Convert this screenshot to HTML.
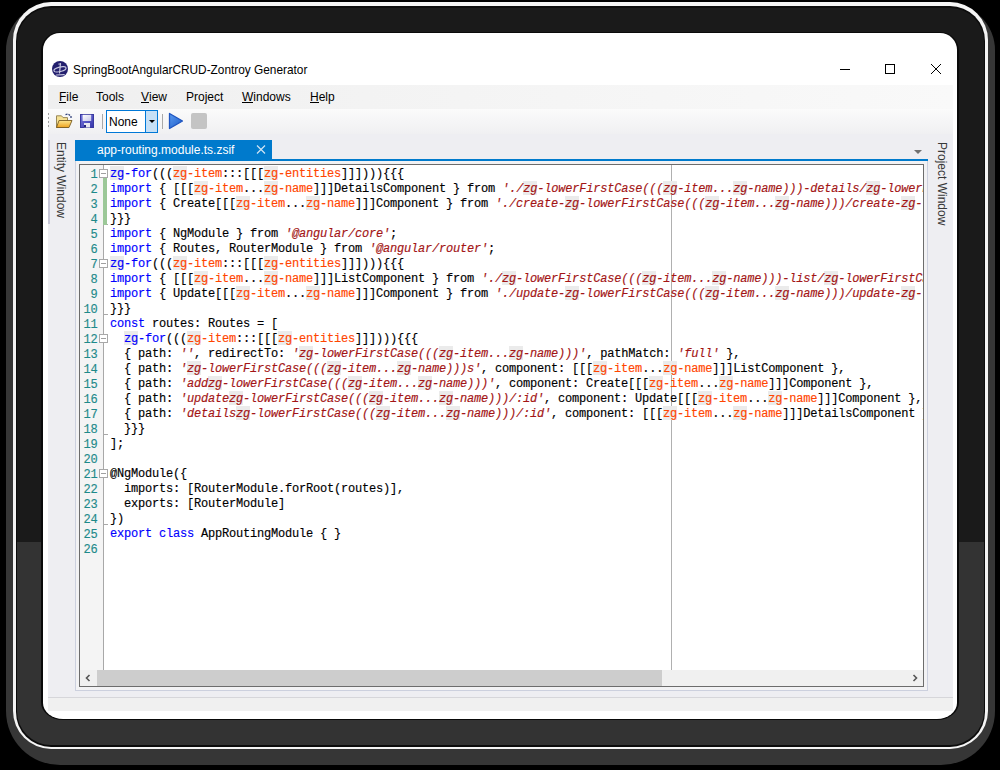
<!DOCTYPE html>
<html><head><meta charset="utf-8">
<style>
*{margin:0;padding:0;box-sizing:border-box}
html,body{width:1000px;height:770px;overflow:hidden;background:#000}
body{position:relative;font-family:"Liberation Sans",sans-serif}
.a{position:absolute}
#shadow{left:5.5px;top:4px;width:989.5px;height:760.5px;border-radius:46px 46px 54px 54px;background:#363636}
#rim{left:13px;top:2px;width:975px;height:747px;border-radius:38px;background:#f4f4f4}
#rimline{left:15.6px;top:6px;width:969.4px;height:740.5px;border-radius:35px;background:#0c0c0c}
#bezel{left:16.5px;top:7.8px;width:967.5px;height:737.2px;border-radius:34px;background:linear-gradient(#1a1a1a 0,#1a1a1a 534.5px,#333 534.5px)}
#screenline{left:41px;top:31.8px;width:917.5px;height:688.4px;border-radius:19px 19px 22px 22px / 19px 19px 18px 18px;background:#0a0a0a}
#screen{left:43px;top:33.3px;width:914px;height:685.9px;border-radius:17px 17px 20px 20px / 17px 17px 16px 16px;background:#fff;overflow:hidden}
#page{position:absolute;left:-43px;top:-33.3px;width:1000px;height:770px}
.ui{position:absolute;font-size:12px;color:#000;white-space:pre;line-height:14px}
.ui u{text-decoration:none;position:relative}
.ui u:after{content:"";position:absolute;left:0;right:0;bottom:1.5px;height:1px;background:#000}
.ln{position:absolute;left:110px;height:15px;line-height:15px;margin-top:2px;-webkit-text-stroke:0.15px currentColor;font-family:"Liberation Mono",monospace;font-size:12px;letter-spacing:-0.2px;white-space:pre;color:#000}
.ln i{font-style:normal}
.ln i.k{color:#0000ff}
.ln i.o{color:#ff4500}
.ln i.s{color:#a31515;font-style:italic}
.fb{position:absolute;left:99px;width:9px;height:9px;border:1px solid #a8a8a8;background:#fff}
.fb:after{content:"";position:absolute;left:1px;top:3px;width:5px;height:1px;background:#a0a0a0}
.zb{position:absolute;width:14px;height:14px;background:#ebebeb}
.num{position:absolute;left:80.5px;width:17px;text-align:right;height:15px;line-height:15px;margin-top:3px;-webkit-text-stroke:0.15px currentColor;font-family:"Liberation Mono",monospace;font-size:12px;letter-spacing:-0.2px;color:#1e8a8a}
</style></head><body>
<div id="shadow" class="a"></div>
<div id="rim" class="a"></div>
<div id="rimline" class="a"></div>
<div id="bezel" class="a"></div>
<div id="screenline" class="a"></div>
<div id="screen" class="a"><div id="page">
  <!-- title bar -->
  <svg class="a" style="left:52px;top:61px" width="16" height="16" viewBox="0 0 16 16">
    <circle cx="8" cy="8" r="8" fill="#231f6e"/>
    <g stroke="#c8c8e0" stroke-width="1.2" fill="none" stroke-linecap="round">
      <path d="M8.4 2.6 L7.6 12"/>
      <path d="M6.8 3 L8.6 3"/>
      <ellipse cx="8" cy="8.3" rx="6.2" ry="2.3" transform="rotate(-14 8 8.3)"/>
      <path d="M4.4 14 L12.2 13.6"/>
    </g>
  </svg>
  <div class="ui" style="left:73px;top:62.6px;font-size:11.85px">SpringBootAngularCRUD-Zontroy Generator</div>
  <div class="a" style="left:840px;top:69px;width:10px;height:1px;background:#000"></div>
  <div class="a" style="left:885px;top:64px;width:10px;height:10px;border:1px solid #000"></div>
  <svg class="a" style="left:930px;top:63px" width="12" height="12" viewBox="0 0 12 12"><path d="M1 1L11 11M11 1L1 11" stroke="#000" stroke-width="1"/></svg>

  <!-- menu bar -->
  <div class="a" style="left:48px;top:85px;width:905px;height:24px;background:linear-gradient(to right,#efefef 0%,#f3f3f3 35%,#f9f9f9 100%)"></div>
  <div class="ui" style="left:59px;top:90px"><u>F</u>ile</div>
  <div class="ui" style="left:96px;top:90px">Tools</div>
  <div class="ui" style="left:141px;top:90px"><u>V</u>iew</div>
  <div class="ui" style="left:186px;top:90px">Project</div>
  <div class="ui" style="left:242px;top:90px"><u>W</u>indows</div>
  <div class="ui" style="left:310px;top:90px"><u>H</u>elp</div>

  <!-- toolbar -->
  <div class="a" style="left:48px;top:109px;width:905px;height:25px;background:linear-gradient(#fbfbfb,#f0f0f2)"></div>
  <div class="a" style="left:48px;top:113px;width:1px;height:14px;background:repeating-linear-gradient(#a0a0a0 0 2px,transparent 2px 4px)"></div>
  <!-- folder -->
  <svg class="a" style="left:55px;top:113px" width="18" height="16" viewBox="0 0 18 16">
    <defs><linearGradient id="fg" x1="0" y1="0" x2="0" y2="1"><stop offset="0" stop-color="#fde68e"/><stop offset="1" stop-color="#eea21e"/></linearGradient></defs>
    <path d="M1.5 2.8 L6.5 2.8 L8 4.6 L12.5 4.6 L12.5 14.5 L1.5 14.5 Z" fill="#f6e294" stroke="#9a8858" stroke-width="1"/>
    <path d="M1.5 14.5 L4 7.5 L17 7.5 L14 14.5 Z" fill="url(#fg)" stroke="#7a5e24" stroke-width="0.9" stroke-linejoin="round"/>
    <path d="M10.5 1.6 L12.5 1.2 M13.5 1.2 L15 2.4 M16 3 L16 5" stroke="#34447c" stroke-width="1.3" fill="none"/>
  </svg>
  <!-- floppy -->
  <svg class="a" style="left:80px;top:114px" width="14" height="14" viewBox="0 0 14 14">
    <defs><linearGradient id="flg" x1="0" y1="0" x2="1" y2="1"><stop offset="0" stop-color="#7a7ae0"/><stop offset="1" stop-color="#3434a8"/></linearGradient>
    <linearGradient id="lbl" x1="0" y1="0" x2="1" y2="1"><stop offset="0" stop-color="#ffffff"/><stop offset="1" stop-color="#c8c8e8"/></linearGradient></defs>
    <rect x="0" y="0" width="14" height="14" fill="url(#flg)"/>
    <rect x="0.5" y="0.5" width="13" height="13" fill="none" stroke="#3a3aa0" stroke-width="1"/>
    <rect x="2.6" y="0.8" width="8.6" height="6.2" fill="url(#lbl)"/>
    <rect x="4" y="9" width="6" height="4.5" fill="#e8e8f0"/>
    <rect x="4" y="11" width="2" height="2.5" fill="#22227a"/>
  </svg>
  <div class="a" style="left:102px;top:114px;width:1px;height:15px;background:#a8a8a8"></div>
  <!-- combo -->
  <div class="a" style="left:106px;top:110px;width:52px;height:23px;border:1px solid #0078d7;background:#fff"></div>
  <div class="a" style="left:145px;top:111px;width:12px;height:21px;background:#c6e0f6;border-left:1px solid #0078d7"></div>
  <div class="a" style="left:149px;top:120px;width:0;height:0;border-left:3px solid transparent;border-right:3px solid transparent;border-top:3px solid #000"></div>
  <div class="ui" style="left:109px;top:114.5px">None</div>
  <div class="a" style="left:162px;top:114px;width:1px;height:15px;background:#a8a8a8"></div>
  <!-- play -->
  <svg class="a" style="left:168px;top:112px" width="16" height="18" viewBox="0 0 16 18">
    <defs><linearGradient id="pg" x1="0" y1="0" x2="1" y2="1"><stop offset="0" stop-color="#5a9af0"/><stop offset="1" stop-color="#1c5cc8"/></linearGradient></defs>
    <path d="M1.5 1.5 L14.5 9 L1.5 16.5 Z" fill="url(#pg)" stroke="#1f55c0" stroke-width="1.3" stroke-linejoin="round"/>
  </svg>
  <!-- stop -->
  <div class="a" style="left:191px;top:113px;width:16px;height:16px;border-radius:2px;background:#c4c4c4"></div>

  <!-- dock area -->
  <div class="a" style="left:48px;top:134px;width:905px;height:563px;background:#eeeef2"></div>
  <div class="a" style="left:48px;top:697px;width:905px;height:1px;background:#d6d6da"></div>
  <div class="a" style="left:48px;top:698px;width:905px;height:13px;background:#f0f0f0"></div>
  <!-- left auto-hide tab -->
  <div class="a" style="left:48px;top:140px;width:2px;height:84px;background:#c6c6d6"></div>
  <div class="ui" style="left:68.2px;top:142px;transform-origin:0 0;transform:rotate(90deg);color:#383838">Entity Window</div>
  <div class="ui" style="left:949.2px;top:142px;transform-origin:0 0;transform:rotate(90deg);color:#383838">Project Window</div>

  <!-- document tab -->
  <div class="a" style="left:75px;top:140px;width:197px;height:20px;background:#007acc"></div>
  <div class="ui" style="left:97px;top:143px;color:#fff">app-routing.module.ts.zsif</div>
  <svg class="a" style="left:256px;top:145px" width="10" height="9" viewBox="0 0 10 9"><path d="M1 0.5L9 8.5M9 0.5L1 8.5" stroke="#d0e4f4" stroke-width="1.2"/></svg>
  <div class="a" style="left:75px;top:159px;width:853px;height:2px;background:#007acc"></div>
  <div class="a" style="left:914px;top:150px;width:0;height:0;border-left:4px solid transparent;border-right:4px solid transparent;border-top:4px solid #717171"></div>

  <!-- editor frame -->
  <div class="a" style="left:75px;top:161px;width:853px;height:530px;border:1px solid #ccd0de;border-top:none;background:#f2f2f4"></div>
  <div class="a" style="left:79px;top:164px;width:845px;height:523px;border:1px solid #6c6c6c;background:#fff;overflow:hidden">
    <div style="position:absolute;left:-80px;top:-165px;width:1000px;height:770px">
      <div class="a" style="left:80px;top:165px;width:23px;height:505px;background:#f4f4f4"></div>
      <div class="a" style="left:103px;top:165px;width:1px;height:505px;background:#a8a8a8"></div>
      <div class="a" style="left:671px;top:165px;width:1px;height:505px;background:#b0b0b0"></div>
      <div class="fb" style="top:169px"></div>
<div class="fb" style="top:259px"></div>
<div class="fb" style="top:334px"></div>
<div class="fb" style="top:469px"></div>
<div class="a" style="left:103px;top:224px;width:5px;height:1px;background:#a8a8a8"></div>
<div class="a" style="left:103px;top:314px;width:5px;height:1px;background:#a8a8a8"></div>
<div class="a" style="left:103px;top:434px;width:5px;height:1px;background:#a8a8a8"></div>
<div class="a" style="left:103px;top:524px;width:5px;height:1px;background:#a8a8a8"></div>
<div class="a" style="left:103px;top:178px;width:4px;height:47px;background:#9cc898"></div>
      <div class="zb" style="left:110.0px;top:166px"></div>
<div class="zb" style="left:173.0px;top:166px"></div>
<div class="zb" style="left:264.0px;top:166px"></div>
<div class="zb" style="left:194.0px;top:181px"></div>
<div class="zb" style="left:264.0px;top:181px"></div>
<div class="zb" style="left:523.0px;top:181px"></div>
<div class="zb" style="left:663.0px;top:181px"></div>
<div class="zb" style="left:733.0px;top:181px"></div>
<div class="zb" style="left:866.0px;top:181px"></div>
<div class="zb" style="left:236.0px;top:196px"></div>
<div class="zb" style="left:306.0px;top:196px"></div>
<div class="zb" style="left:565.0px;top:196px"></div>
<div class="zb" style="left:705.0px;top:196px"></div>
<div class="zb" style="left:775.0px;top:196px"></div>
<div class="zb" style="left:901.0px;top:196px"></div>
<div class="zb" style="left:110.0px;top:256px"></div>
<div class="zb" style="left:173.0px;top:256px"></div>
<div class="zb" style="left:264.0px;top:256px"></div>
<div class="zb" style="left:194.0px;top:271px"></div>
<div class="zb" style="left:264.0px;top:271px"></div>
<div class="zb" style="left:502.0px;top:271px"></div>
<div class="zb" style="left:642.0px;top:271px"></div>
<div class="zb" style="left:712.0px;top:271px"></div>
<div class="zb" style="left:824.0px;top:271px"></div>
<div class="zb" style="left:236.0px;top:286px"></div>
<div class="zb" style="left:306.0px;top:286px"></div>
<div class="zb" style="left:565.0px;top:286px"></div>
<div class="zb" style="left:705.0px;top:286px"></div>
<div class="zb" style="left:775.0px;top:286px"></div>
<div class="zb" style="left:901.0px;top:286px"></div>
<div class="zb" style="left:124.0px;top:331px"></div>
<div class="zb" style="left:187.0px;top:331px"></div>
<div class="zb" style="left:278.0px;top:331px"></div>
<div class="zb" style="left:299.0px;top:346px"></div>
<div class="zb" style="left:439.0px;top:346px"></div>
<div class="zb" style="left:509.0px;top:346px"></div>
<div class="zb" style="left:187.0px;top:361px"></div>
<div class="zb" style="left:327.0px;top:361px"></div>
<div class="zb" style="left:397.0px;top:361px"></div>
<div class="zb" style="left:593.0px;top:361px"></div>
<div class="zb" style="left:663.0px;top:361px"></div>
<div class="zb" style="left:208.0px;top:376px"></div>
<div class="zb" style="left:348.0px;top:376px"></div>
<div class="zb" style="left:418.0px;top:376px"></div>
<div class="zb" style="left:649.0px;top:376px"></div>
<div class="zb" style="left:719.0px;top:376px"></div>
<div class="zb" style="left:229.0px;top:391px"></div>
<div class="zb" style="left:369.0px;top:391px"></div>
<div class="zb" style="left:439.0px;top:391px"></div>
<div class="zb" style="left:698.0px;top:391px"></div>
<div class="zb" style="left:768.0px;top:391px"></div>
<div class="zb" style="left:236.0px;top:406px"></div>
<div class="zb" style="left:376.0px;top:406px"></div>
<div class="zb" style="left:446.0px;top:406px"></div>
<div class="zb" style="left:663.0px;top:406px"></div>
<div class="zb" style="left:733.0px;top:406px"></div>
      <div class="ln" style="top:165px"><i class="k">zg-for</i>(((<i class="o">zg-item</i>:::[[[<i class="o">zg-entities</i>]]]))){{{</div>
<div class="ln" style="top:180px"><i class="k">import</i> { [[[<i class="o">zg-item</i>...<i class="o">zg-name</i>]]]DetailsComponent } from <i class="s">'./zg-lowerFirstCase(((zg-item...zg-name)))-details/zg-lowerFirstCase(((zg-item...zg-name)))-details.component'</i>;</div>
<div class="ln" style="top:195px"><i class="k">import</i> { Create[[[<i class="o">zg-item</i>...<i class="o">zg-name</i>]]]Component } from <i class="s">'./create-zg-lowerFirstCase(((zg-item...zg-name)))/create-zg-lowerFirstCase(((zg-item...zg-name))).component'</i>;</div>
<div class="ln" style="top:210px">}}}</div>
<div class="ln" style="top:225px"><i class="k">import</i> { NgModule } from <i class="s">'@angular/core'</i>;</div>
<div class="ln" style="top:240px"><i class="k">import</i> { Routes, RouterModule } from <i class="s">'@angular/router'</i>;</div>
<div class="ln" style="top:255px"><i class="k">zg-for</i>(((<i class="o">zg-item</i>:::[[[<i class="o">zg-entities</i>]]]))){{{</div>
<div class="ln" style="top:270px"><i class="k">import</i> { [[[<i class="o">zg-item</i>...<i class="o">zg-name</i>]]]ListComponent } from <i class="s">'./zg-lowerFirstCase(((zg-item...zg-name)))-list/zg-lowerFirstCase(((zg-item...zg-name)))-list.component'</i>;</div>
<div class="ln" style="top:285px"><i class="k">import</i> { Update[[[<i class="o">zg-item</i>...<i class="o">zg-name</i>]]]Component } from <i class="s">'./update-zg-lowerFirstCase(((zg-item...zg-name)))/update-zg-lowerFirstCase(((zg-item...zg-name))).component'</i>;</div>
<div class="ln" style="top:300px">}}}</div>
<div class="ln" style="top:315px"><i class="k">const</i> routes: Routes = [</div>
<div class="ln" style="top:330px">  <i class="k">zg-for</i>(((<i class="o">zg-item</i>:::[[[<i class="o">zg-entities</i>]]]))){{{</div>
<div class="ln" style="top:345px">  { path: <i class="s">''</i>, redirectTo: <i class="s">'zg-lowerFirstCase(((zg-item...zg-name)))'</i>, pathMatch: <i class="s">'full'</i> },</div>
<div class="ln" style="top:360px">  { path: <i class="s">'zg-lowerFirstCase(((zg-item...zg-name)))s'</i>, component: [[[<i class="o">zg-item</i>...<i class="o">zg-name</i>]]]ListComponent },</div>
<div class="ln" style="top:375px">  { path: <i class="s">'addzg-lowerFirstCase(((zg-item...zg-name)))'</i>, component: Create[[[<i class="o">zg-item</i>...<i class="o">zg-name</i>]]]Component },</div>
<div class="ln" style="top:390px">  { path: <i class="s">'updatezg-lowerFirstCase(((zg-item...zg-name)))/:id'</i>, component: Update[[[<i class="o">zg-item</i>...<i class="o">zg-name</i>]]]Component },</div>
<div class="ln" style="top:405px">  { path: <i class="s">'detailszg-lowerFirstCase(((zg-item...zg-name)))/:id'</i>, component: [[[<i class="o">zg-item</i>...<i class="o">zg-name</i>]]]DetailsComponent },</div>
<div class="ln" style="top:420px">  }}}</div>
<div class="ln" style="top:435px">];</div>
<div class="ln" style="top:450px"></div>
<div class="ln" style="top:465px">@NgModule({</div>
<div class="ln" style="top:480px">  imports: [RouterModule.forRoot(routes)],</div>
<div class="ln" style="top:495px">  exports: [RouterModule]</div>
<div class="ln" style="top:510px">})</div>
<div class="ln" style="top:525px"><i class="k">export</i> <i class="k">class</i> AppRoutingModule { }</div>
<div class="ln" style="top:540px"></div>
      <div class="num" style="top:165px">1</div>
<div class="num" style="top:180px">2</div>
<div class="num" style="top:195px">3</div>
<div class="num" style="top:210px">4</div>
<div class="num" style="top:225px">5</div>
<div class="num" style="top:240px">6</div>
<div class="num" style="top:255px">7</div>
<div class="num" style="top:270px">8</div>
<div class="num" style="top:285px">9</div>
<div class="num" style="top:300px">10</div>
<div class="num" style="top:315px">11</div>
<div class="num" style="top:330px">12</div>
<div class="num" style="top:345px">13</div>
<div class="num" style="top:360px">14</div>
<div class="num" style="top:375px">15</div>
<div class="num" style="top:390px">16</div>
<div class="num" style="top:405px">17</div>
<div class="num" style="top:420px">18</div>
<div class="num" style="top:435px">19</div>
<div class="num" style="top:450px">20</div>
<div class="num" style="top:465px">21</div>
<div class="num" style="top:480px">22</div>
<div class="num" style="top:495px">23</div>
<div class="num" style="top:510px">24</div>
<div class="num" style="top:525px">25</div>
<div class="num" style="top:540px">26</div>
      <!-- scrollbar -->
      <div class="a" style="left:80px;top:670px;width:843px;height:16px;background:#f0f0f0"></div>
      <div class="a" style="left:97px;top:670px;width:565px;height:16px;background:#cdcdcd"></div>
      <svg class="a" style="left:84px;top:674px" width="8" height="8" viewBox="0 0 8 8"><path d="M5.5 1 L2.5 4 L5.5 7" stroke="#555" stroke-width="1.6" fill="none"/></svg>
      <svg class="a" style="left:911px;top:674px" width="8" height="8" viewBox="0 0 8 8"><path d="M2.5 1 L5.5 4 L2.5 7" stroke="#555" stroke-width="1.6" fill="none"/></svg>
    </div>
  </div>
</div></div>
</body></html>
